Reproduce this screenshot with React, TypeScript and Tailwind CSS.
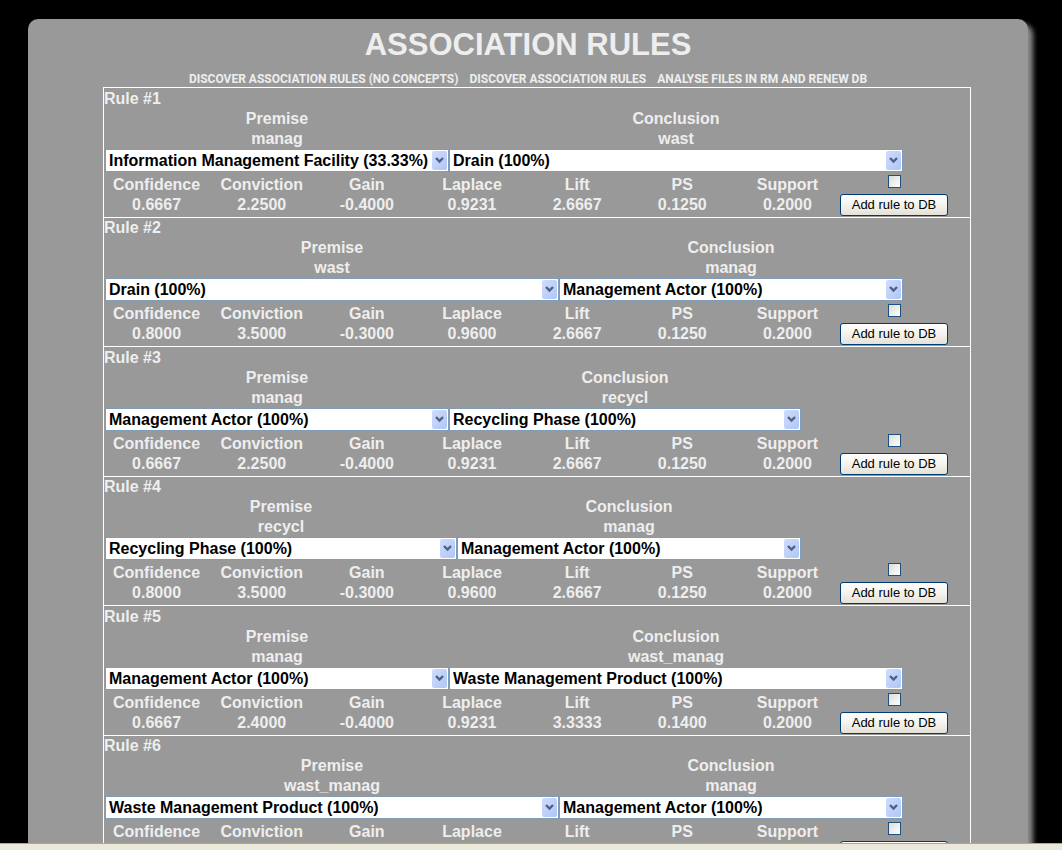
type Side = { term: string; concept: string; width: string };

type Rule = {
  premise: Side;
  conclusion: Side;
  values: string[];
};

const NARROW = 'w-[344px]';
const MEDIUM = 'w-[352px]';
const WIDE = 'w-[454px]';

const METRICS = ['Confidence', 'Conviction', 'Gain', 'Laplace', 'Lift', 'PS', 'Support'];

const LINKS = [
  'DISCOVER ASSOCIATION RULES (NO CONCEPTS)',
  'DISCOVER ASSOCIATION RULES',
  'ANALYSE FILES IN RM AND RENEW DB',
];

const RULES: Rule[] = [
  {
    premise: { term: 'manag', concept: 'Information Management Facility (33.33%)', width: NARROW },
    conclusion: { term: 'wast', concept: 'Drain (100%)', width: WIDE },
    values: ['0.6667', '2.2500', '-0.4000', '0.9231', '2.6667', '0.1250', '0.2000'],
  },
  {
    premise: { term: 'wast', concept: 'Drain (100%)', width: WIDE },
    conclusion: { term: 'manag', concept: 'Management Actor (100%)', width: NARROW },
    values: ['0.8000', '3.5000', '-0.3000', '0.9600', '2.6667', '0.1250', '0.2000'],
  },
  {
    premise: { term: 'manag', concept: 'Management Actor (100%)', width: NARROW },
    conclusion: { term: 'recycl', concept: 'Recycling Phase (100%)', width: MEDIUM },
    values: ['0.6667', '2.2500', '-0.4000', '0.9231', '2.6667', '0.1250', '0.2000'],
  },
  {
    premise: { term: 'recycl', concept: 'Recycling Phase (100%)', width: MEDIUM },
    conclusion: { term: 'manag', concept: 'Management Actor (100%)', width: NARROW },
    values: ['0.8000', '3.5000', '-0.3000', '0.9600', '2.6667', '0.1250', '0.2000'],
  },
  {
    premise: { term: 'manag', concept: 'Management Actor (100%)', width: NARROW },
    conclusion: { term: 'wast_manag', concept: 'Waste Management Product (100%)', width: WIDE },
    values: ['0.6667', '2.4000', '-0.4000', '0.9231', '3.3333', '0.1400', '0.2000'],
  },
  {
    premise: { term: 'wast_manag', concept: 'Waste Management Product (100%)', width: WIDE },
    conclusion: { term: 'manag', concept: 'Management Actor (100%)', width: NARROW },
    values: ['0.8000', '3.5000', '-0.3000', '0.9600', '2.6667', '0.1250', '0.2000'],
  },
];

function ConceptPicker({ id, label, side }: { id: string; label: string; side: Side }) {
  return (
    <div className={`${side.width} shrink-0 text-center`}>
      <label htmlFor={id} className="block">
        {label}
        <br />
        {side.term}
      </label>
      <div className="relative">
        <select
          id={id}
          className="block h-[23px] w-full appearance-none border border-[#7f9db9] bg-white pl-[3px] pr-4 text-base leading-5 font-bold text-black"
        >
          <option>{side.concept}</option>
        </select>
        <span className="pointer-events-none absolute top-[2px] right-[2px] flex h-[19px] w-[15px] items-center justify-center rounded-[2px] bg-linear-to-br from-[#d0dcfc] to-[#b0c6f6]">
          <svg width="9" height="7" viewBox="0 0 9 7" aria-hidden="true">
            <path d="M1 1 L4.5 4.5 L8 1" fill="none" stroke="#4d6185" strokeWidth="2.4" />
          </svg>
        </span>
      </div>
    </div>
  );
}

function RulePanel({ rule, number }: { rule: Rule; number: number }) {
  return (
    <section className="border-t border-white pb-px odd:pt-px">
      <h2>Rule #{number}</h2>
      <div className="flex pl-px">
        <ConceptPicker id={`premise-${number}`} label="Premise" side={rule.premise} />
        <ConceptPicker id={`conclusion-${number}`} label="Conclusion" side={rule.conclusion} />
      </div>
      <div className="flex items-start pt-[3px]">
        <table className="w-[736px] table-fixed border-collapse text-center">
          <thead>
            <tr>
              {METRICS.map((name) => (
                <th key={name} className="p-0">
                  {name}
                </th>
              ))}
            </tr>
          </thead>
          <tbody>
            <tr>
              {rule.values.map((value, i) => (
                <td key={METRICS[i]} className="p-0">
                  {value}
                </td>
              ))}
            </tr>
          </tbody>
        </table>
        <div className="flex h-[41px] w-[108px] flex-col items-center justify-between">
          <input
            type="checkbox"
            aria-label={`Select rule ${number}`}
            className="size-[13px] appearance-none border border-[#1c5180] bg-linear-to-br from-[#dcdcd7] to-white"
          />
          <button
            type="button"
            className="h-[22px] w-full rounded-[3px] border border-[#003c74] bg-linear-to-b from-white via-[#f4f3ee] to-[#e4e1d6] text-[13px] leading-5 font-normal text-black"
          >
            Add rule to DB
          </button>
        </div>
      </div>
    </section>
  );
}

export default function App() {
  return (
    <div className="flex h-screen flex-col bg-black font-['Liberation_Sans',Arial,sans-serif] text-base leading-5 font-bold text-[#eeeeee]">
      <main className="min-h-0 flex-1 overflow-hidden pt-[19px] pr-[34px] pl-7">
        <div className="rounded-[10px] bg-[#999999] pb-8 shadow-[5px_5px_5px_#888888]">
          <h1 className="pt-[6px] text-center text-[31px] leading-10">ASSOCIATION RULES</h1>
          <nav className="flex justify-center gap-[11px] pt-[6px] font-[Roboto,sans-serif] text-[12px] leading-4">
            {LINKS.map((text) => (
              <a key={text} href="#">
                {text}
              </a>
            ))}
          </nav>
          <div className="mr-[57px] ml-[75px] border-x border-b border-white">
            {RULES.map((rule, i) => (
              <RulePanel key={i} rule={rule} number={i + 1} />
            ))}
          </div>
        </div>
      </main>
      <footer className="h-[7px] border-t border-[#aca899] bg-[#ece9d8]" />
    </div>
  );
}
